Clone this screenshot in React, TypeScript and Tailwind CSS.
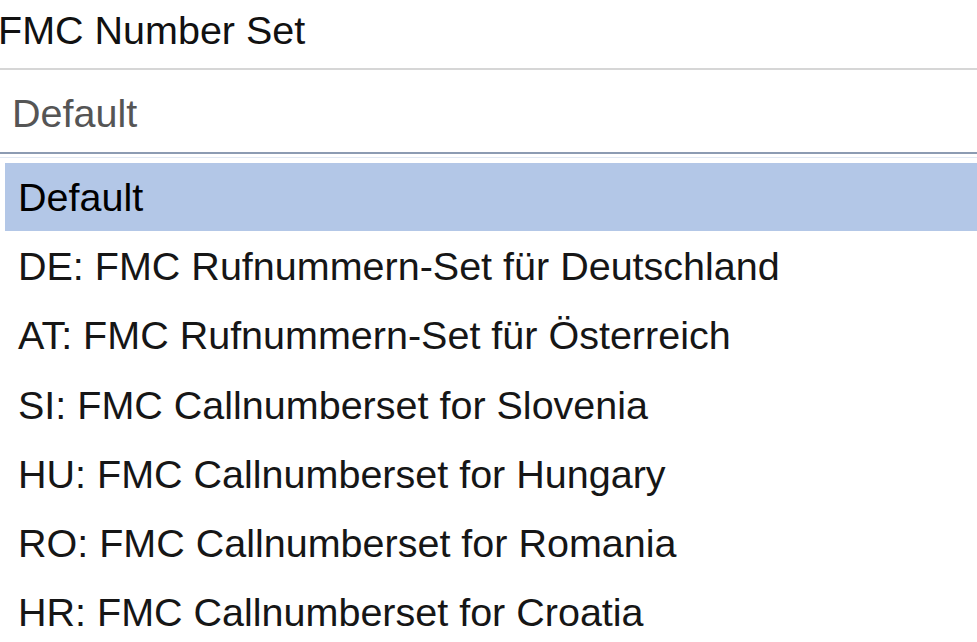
const options = [
  'Default',
  'DE: FMC Rufnummern-Set für Deutschland',
  'AT: FMC Rufnummern-Set für Österreich',
  'SI: FMC Callnumberset for Slovenia',
  'HU: FMC Callnumberset for Hungary',
  'RO: FMC Callnumberset for Romania',
  'HR: FMC Callnumberset for Croatia',
];

export default function App() {
  const selected = 0;

  return (
    <div className="w-[977px] h-[642px] overflow-hidden bg-white font-['Liberation_Sans',Arial,sans-serif] text-[39.5px]">
      {/* Field label */}
      <div className="h-[68px] leading-[60px] -ml-[2px] text-[#111] whitespace-nowrap">FMC Number Set</div>

      {/* Closed select */}
      <div className="h-[86px] border-t-2 border-b-2 border-t-[#d6d6d6] border-b-[#8c9bb2] pl-[12px] leading-[86px] text-[#555] whitespace-nowrap">
        Default
      </div>

      {/* Open option list */}
      <div className="mt-[3px] border-t border-[#e1e8f2] pt-[5px] pl-[5px]">
        {options.map((opt, i) => (
          <div
            key={opt}
            className={
              i === selected
                ? 'h-[68px] leading-[68px] pl-[13px] mb-[1.2px] bg-[#b3c7e7] text-black whitespace-nowrap'
                : 'h-[69.2px] leading-[69.2px] pl-[13px] text-[#161616] whitespace-nowrap'
            }
          >
            {opt}
          </div>
        ))}
      </div>
    </div>
  );
}
